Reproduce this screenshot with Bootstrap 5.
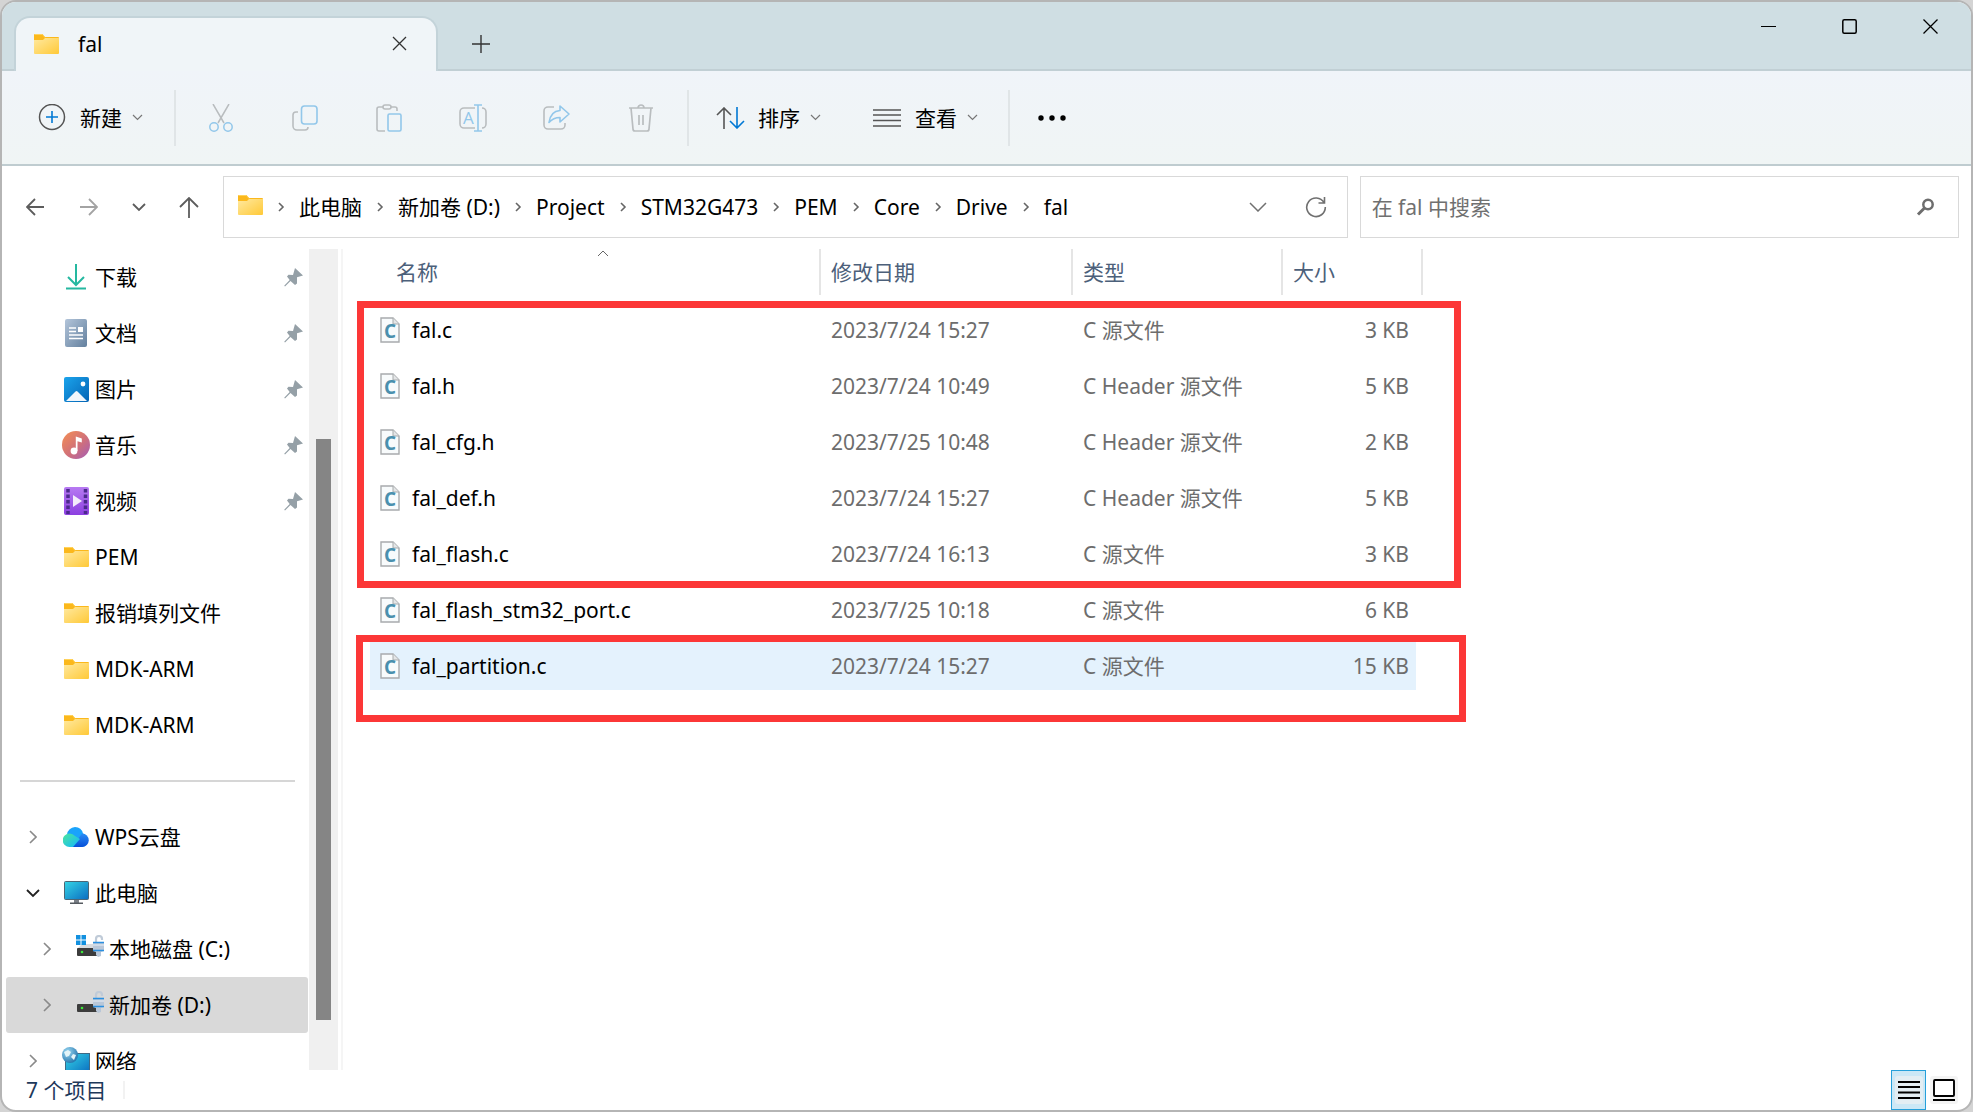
<!DOCTYPE html>
<html lang="zh-CN">
<head>
<meta charset="utf-8">
<meta name="viewport" content="width=device-width, initial-scale=1">
<title>fal</title>
<link href="https://cdn.jsdelivr.net/npm/bootstrap@5.3.0/dist/css/bootstrap.min.css" rel="stylesheet">
<style>
body{font-family:"Noto Sans","Noto Sans CJK SC",sans-serif;font-size:21px;line-height:28px;color:#000;background:#d4d4d4;overflow:hidden}
svg{display:block;flex:none}
button{color:inherit}
.win{border:2px solid #b5b5b5;border-radius:16px;background:#fff}
.titlebar{background:#cfdee3;height:69px;border-bottom:2px solid #c1cfd4}
.wtab{width:424px;height:55px;margin:0 0 -2px 12px;padding:0 29px 2px 18px;border:2px solid #c3d3d9;border-bottom:0;border-radius:16px 16px 0 0;background:#f0f5f8}
.wtab span{margin-left:19px}
.plainbtn{border:0;background:none;padding:0;display:flex;align-items:center;justify-content:center;flex:none}
.addtab{width:86px;height:51px}
.winbtn{width:81px;height:48px}
.cmdbar{height:95px;padding-left:36px;background:linear-gradient(#f0f4f9,#f0f5f5);border-bottom:2px solid #bfccd0}
.lbl{margin:0 10px 0 14px}
.vline{width:2px;height:56px;background:#e0e5e7;flex:none}
.cmd{width:84px;height:56px}
.cmdnew{width:136px;justify-content:flex-start}
.cmdsort,.cmdview{justify-content:flex-start;padding-left:27px}
.cmdsort{width:157px}
.cmdview{width:162px}
.cmdsort .lbl{margin-left:13px}
.cmdgroup{padding:0 4px 0 3px}
.addrrow{height:83px;padding:10px 12px 11px 8px}
.navb{width:50px;height:50px}
.addr{flex:1124 1 1124px;min-width:0;border:1px solid #d9d9d9;margin-left:9px;padding:0 6px 0 14px}
.search{flex:599 1 599px;min-width:0;border:1px solid #d9d9d9;margin-left:12px;padding:0 23px 0 11px}
.search input{border:0;outline:0;background:none;flex:1;min-width:0;padding:0}
.search input::placeholder{color:#707070;opacity:1}
.crumbs{margin:0}
.crumbs li{display:flex;align-items:center}
.crumbs svg{margin:0 14px}
.crumbs a,.tree a{color:#000;text-decoration:none;white-space:nowrap}
.side{width:341px;overflow:hidden;border-right:2px solid #f5f5f5}
.tree{width:307px;padding-left:4px}
.tree a{display:flex;align-items:center;height:56px;flex:none}
.twist{width:28px;margin-left:13px;display:flex;justify-content:center}
.ico{width:28px;margin-left:15px;margin-right:5px;display:flex;justify-content:center}
.nest .twist{margin-left:27px}
.picked{background:#d9d9d9;border-radius:3px;margin-right:1px}
.pinned{margin-left:auto;margin-right:5px}
.rule{height:2px;background:#d6d6d6;margin:27px 14px 27px 14px;flex:none}
.track{width:29px;background:#f0f0f0;padding-top:190px}
.thumb{width:15px;height:581px;margin:0 auto;background:#858585}
.files{padding-left:27px;overflow:hidden}
.filewrap{width:1053px;position:relative}
.ftable{table-layout:fixed;width:100%;border-collapse:separate;border-spacing:0;white-space:nowrap}
.ftable th{height:46px;font-weight:400;color:#4c607a;padding:0 0 0 10px;border-right:2px solid #e5e5e5;position:relative}
.ftable th:first-child{padding-left:26px}
.sortmark{position:absolute;top:0;left:50%;margin-left:2px}
.ftable td{height:56px;padding:0 0 0 10px;color:#6d6d6d;border:solid transparent;border-width:4px 0;background-clip:padding-box}
.ftable td:first-child{color:#000;padding-left:10px}
.ftable td:last-child{text-align:right;padding:0 7px 0 0;border-right-width:7px}
.ftable .gap td{height:7px;border:0;padding:0}
.hov td{background-color:#e4f2fd}
.mark1,.mark2{position:absolute;border:7px solid #fc3737;pointer-events:none}
.mark1{left:-13px;top:52px;width:1104px;height:287px}
.mark2{left:-14px;top:386px;width:1110px;height:87px}
.status{height:40px;padding:0 10px 0 24px;color:#1e395b}
.status .vl{width:2px;height:18px;background:#f2f2f2;margin-left:17px}
.modebtn{width:35px;height:40px;border:1px solid transparent}
.modebtn.on{background:#cbe8f6;border-color:#26a0da}
</style>
</head>
<body class="vh-100">
<svg width="0" height="0" class="position-absolute" aria-hidden="true">
<defs>
<linearGradient id="gf" x1="0" y1="0" x2="1" y2="1"><stop offset="0" stop-color="#ffe9a0"/><stop offset="1" stop-color="#ffc937"/></linearGradient>
<linearGradient id="gdoc" x1="0" y1="0" x2="1" y2="1"><stop offset="0" stop-color="#b3c5da"/><stop offset="1" stop-color="#63809e"/></linearGradient>
<linearGradient id="gpic" x1="0" y1="0" x2="1" y2="1"><stop offset="0" stop-color="#1ba4ec"/><stop offset="1" stop-color="#0463b4"/></linearGradient>
<linearGradient id="gmus" x1="0" y1="0" x2="1" y2="1"><stop offset="0" stop-color="#f58f52"/><stop offset=".55" stop-color="#d0707a"/><stop offset="1" stop-color="#a45cb8"/></linearGradient>
<linearGradient id="gvid" x1="0" y1="0" x2="0" y2="1"><stop offset="0" stop-color="#b77af2"/><stop offset="1" stop-color="#8c3fe0"/></linearGradient>
<linearGradient id="gmon" x1="0" y1="0" x2="1" y2="1"><stop offset="0" stop-color="#35d5e6"/><stop offset="1" stop-color="#0a6cc0"/></linearGradient>
<linearGradient id="gcl" x1="0" y1="0" x2="1" y2="1"><stop offset="0" stop-color="#4be79c"/><stop offset="1" stop-color="#12b5ff"/></linearGradient>
<linearGradient id="gcd" x1="0" y1="0" x2="0" y2="1"><stop offset="0" stop-color="#2a8cf5"/><stop offset="1" stop-color="#064fd8"/></linearGradient>
<radialGradient id="ggl" cx=".35" cy=".3" r=".8"><stop offset="0" stop-color="#9ad8f2"/><stop offset="1" stop-color="#1d6ea8"/></radialGradient>
</defs>
<symbol id="folder" viewBox="0 0 25 20"><path d="M1 0h7.500l2.500 3h13a1 1 0 0 1 1 1v5H0V1a1 1 0 0 1 1-1z" fill="#fbb81c"/><path d="M1 .5h7.500l2.500 3" stroke="#ffd35c" fill="none"/><path d="M0 6h9l2-2h14v15a1 1 0 0 1-1 1H1a1 1 0 0 1-1-1z" fill="url(#gf)"/></symbol>
<symbol id="pin" viewBox="0 0 20 20"><path d="M11 1l8 7.500-6 1.800 0 6.200-2 1.500-4.500-4-5.500 5.500-.8-.8 5.500-5.600-2.700-3.600 1.500-1.800 4.500.2z" fill="#95a0a7"/></symbol>
<symbol id="dn" viewBox="0 0 11 7"><path d="M1 1l4.500 4.500L10 1" fill="none" stroke="#777" stroke-width="1.200"/></symbol>
<symbol id="rt" viewBox="0 0 8 14"><path d="M1 1l6 6-6 6" fill="none" stroke="currentColor" stroke-width="1.600"/></symbol>
<symbol id="drive" viewBox="0 0 28 24"><path d="M6 9h19l2 5H1z" fill="#d9dbde"/><rect x="1" y="13" width="24" height="8" rx="1" fill="#3c3c3c"/><circle cx="6" cy="17" r="1.300" fill="#3be83b"/><path d="M20 8V4a3 3 0 0 1 6 0v1" fill="none" stroke="#c0cbd8" stroke-width="2.200"/><path d="M17 7h11v9l-3 1v4l-3 1-2-2v-3l-3-1z" fill="#b9c7d8"/><path d="M17 7.500h11M17 15.500h11" stroke="#2a8fe0" stroke-width="1.500"/><path d="M17 10h11" stroke="#e9eef5"/></symbol>
</svg>

<div class="win vh-100 d-flex flex-column overflow-hidden">
<header class="titlebar d-flex align-items-end flex-shrink-0">
  <div class="wtab d-flex align-items-center flex-shrink-0">
    <svg width="25" height="20"><use href="#folder"/></svg><span>fal</span>
    <button class="plainbtn ms-auto" aria-label="关闭标签页"><svg width="15" height="15"><path d="M1 1l13 13M14 1L1 14" stroke="#333" stroke-width="1.300"/></svg></button>
  </div>
  <button class="plainbtn addtab" aria-label="新标签页"><svg width="18" height="18"><path d="M9 0v18M0 9h18" stroke="#333" stroke-width="1.400"/></svg></button>
  <div class="d-flex ms-auto align-self-start">
    <button class="plainbtn winbtn" aria-label="最小化"><svg width="15" height="15"><path d="M0 7.500h15" stroke="#000"/></svg></button>
    <button class="plainbtn winbtn" aria-label="最大化"><svg width="15" height="15"><rect x=".8" y=".8" width="13.400" height="13.400" rx="1.500" fill="none" stroke="#000" stroke-width="1.500"/></svg></button>
    <button class="plainbtn winbtn" aria-label="关闭"><svg width="15" height="15"><path d="M.5.5l14 14M14.500.5l-14 14" stroke="#000" stroke-width="1.300"/></svg></button>
  </div>
</header>

<div class="cmdbar d-flex align-items-center flex-shrink-0" role="toolbar" aria-label="命令">
  <button class="plainbtn cmd cmdnew"><svg width="28" height="28" fill="none"><circle cx="14" cy="13" r="12.500" stroke="#555" stroke-width="1.500"/><path d="M14 7v12M8 13h12" stroke="#0078d4" stroke-width="1.600"/></svg><span class="lbl">新建</span><svg width="11" height="7"><use href="#dn"/></svg></button>
  <div class="vline"></div>
  <div class="cmdgroup d-flex">
    <button class="plainbtn cmd" aria-label="剪切"><svg width="26" height="28" fill="none" stroke-width="1.500"><path d="M5 0l11 19M21 0L10 19" stroke="#b9bdbf"/><circle cx="6" cy="23" r="4.200" stroke="#92c7ea"/><circle cx="20" cy="23" r="4.200" stroke="#92c7ea"/></svg></button>
    <button class="plainbtn cmd" aria-label="复制"><svg width="26" height="26" fill="none" stroke-width="1.600"><path d="M6 7H4a3 3 0 0 0-3 3v11a4 4 0 0 0 4 4h8a3 3 0 0 0 3-3" stroke="#b9bdbf"/><rect x="9.500" y="1" width="15.500" height="18" rx="3" stroke="#92c7ea"/></svg></button>
    <button class="plainbtn cmd" aria-label="粘贴"><svg width="26" height="28" fill="none" stroke-width="1.600"><path d="M7 3H3a2 2 0 0 0-2 2v20a2 2 0 0 0 2 2h6M15 3h4a2 2 0 0 1 2 2v2" stroke="#b9bdbf"/><rect x="7" y="1" width="8" height="4" rx="2" stroke="#b9bdbf"/><rect x="12" y="10" width="13" height="17" rx="1.500" stroke="#92c7ea"/></svg></button>
    <button class="plainbtn cmd" aria-label="重命名"><svg width="28" height="28" fill="none" stroke-width="1.600"><path d="M16 4H5a4 4 0 0 0-4 4v12a4 4 0 0 0 4 4h11M23 4a4 4 0 0 1 4 4v12a4 4 0 0 1-4 4" stroke="#b9bdbf"/><path d="M19 1v26M15 1h8M15 27h8" stroke="#92c7ea"/><text x="4" y="20" font-family="Open Sans, sans-serif" font-size="17" fill="#92c7ea">A</text></svg></button>
    <button class="plainbtn cmd" aria-label="共享"><svg width="28" height="26" fill="none" stroke-width="1.600" stroke-linejoin="round"><path d="M11 2H5a4 4 0 0 0-4 4v14a4 4 0 0 0 4 4h13a4 4 0 0 0 4-4v-2" stroke="#b9bdbf"/><path d="M17 1l9 8-9 8v-4.500c-5 0-8 1.500-11 5C7 10 10 6 17 5.500z" stroke="#92c7ea"/></svg></button>
    <button class="plainbtn cmd" aria-label="删除"><svg width="26" height="28" fill="none" stroke="#b9bdbf" stroke-width="1.700"><path d="M1 4h24M10 4a3 3 0 0 1 6 0M3 4l2 21a2 2 0 0 0 2 2h12a2 2 0 0 0 2-2l2-21M11 11v10M15 11v10"/></svg></button>
  </div>
  <div class="vline"></div>
  <button class="plainbtn cmd cmdsort"><svg width="29" height="22" fill="none" stroke-width="1.600"><path d="M8 22V1M1 8l7-7 7 7" stroke="#555"/><path d="M21 0v21M14 14l7 7 7-7" stroke="#0078d4"/></svg><span class="lbl">排序</span><svg width="11" height="7"><use href="#dn"/></svg></button>
  <button class="plainbtn cmd cmdview"><svg width="28" height="20"><path d="M0 2h28M0 7h28M0 12.500h28M0 18h28" stroke="#555" stroke-width="1.600"/></svg><span class="lbl">查看</span><svg width="11" height="7"><use href="#dn"/></svg></button>
  <div class="vline"></div>
  <button class="plainbtn cmd" aria-label="更多"><svg width="30" height="8"><circle cx="4" cy="4" r="2.700"/><circle cx="15" cy="4" r="2.700"/><circle cx="26" cy="4" r="2.700"/></svg></button>
</div>

<div class="addrrow d-flex flex-shrink-0">
  <nav class="d-flex align-items-center" aria-label="导航">
    <button class="plainbtn navb" aria-label="后退"><svg width="18" height="18" fill="none" stroke="#5c5c5c" stroke-width="1.800"><path d="M18 9H1M9 1L1 9l8 8"/></svg></button>
    <button class="plainbtn navb ms-1" aria-label="前进"><svg width="18" height="18" fill="none" stroke="#a3a3a3" stroke-width="1.800"><path d="M0 9h17M9 1l8 8-8 8"/></svg></button>
    <button class="plainbtn navb" aria-label="最近"><svg width="14" height="9" fill="none" stroke="#5c5c5c" stroke-width="1.800"><path d="M1 1l6 6 6-6"/></svg></button>
    <button class="plainbtn navb" aria-label="向上"><svg width="20" height="21" fill="none" stroke="#5c5c5c" stroke-width="1.800"><path d="M10 21V1M1 10l9-9 9 9"/></svg></button>
  </nav>
  <div class="addr d-flex align-items-center">
    <svg width="25" height="20" class="mb-1"><use href="#folder"/></svg>
    <ol class="crumbs d-flex list-unstyled" id="crumbs"></ol>
    <button class="plainbtn navb ms-auto" aria-label="历史"><svg width="18" height="10" fill="none" stroke="#707070" stroke-width="1.500"><path d="M1 1l8 8 8-8"/></svg></button>
    <button class="plainbtn navb ms-2" aria-label="刷新"><svg width="22" height="22" fill="none" stroke="#707070" stroke-width="1.600"><path d="M19 6.500A9.300 9.300 0 1 0 20.300 11M19.500 1v6h-6"/></svg></button>
  </div>
  <label class="search d-flex align-items-center"><input type="text" placeholder="在 fal 中搜索" aria-label="搜索"><svg width="19" height="18" fill="none" stroke="#6d6d6d"><circle cx="12" cy="6.500" r="4.700" stroke-width="2.500"/><path d="M8.500 10L2 16.500" stroke-width="3"/></svg></label>
</div>

<div class="d-flex flex-grow-1" style="min-height:0">
  <aside class="side d-flex flex-shrink-0">
    <nav class="tree d-flex flex-column" id="tree" aria-label="文件夹"></nav>
    <div class="track"><div class="thumb"></div></div>
  </aside>
  <main class="files flex-grow-1">
    <div class="filewrap">
      <table class="ftable">
        <colgroup><col style="width:451px"><col style="width:252px"><col style="width:210px"><col></colgroup>
        <thead><tr><th scope="col">名称<svg class="sortmark" width="12" height="8" fill="none" stroke="#666"><path d="M1 7l5-5 5 5"/></svg></th><th scope="col">修改日期</th><th scope="col">类型</th><th scope="col">大小</th></tr></thead>
        <tbody id="rows"><tr class="gap" aria-hidden="true"><td colspan="4"></td></tr></tbody>
      </table>
      <div class="mark1"></div><div class="mark2"></div>
    </div>
  </main>
</div>

<footer class="status d-flex align-items-center flex-shrink-0">
  <span>7 个项目</span><span class="vl"></span>
  <button class="plainbtn modebtn on ms-auto" aria-label="详细信息"><svg width="28" height="28"><rect width="28" height="28" rx="3" fill="#e3eef3"/><path d="M3 6h22M3 11h22M3 16.500h22M3 22h22" stroke="#000" stroke-width="1.800"/></svg></button>
  <button class="plainbtn modebtn" aria-label="大图标"><svg width="28" height="28"><rect width="28" height="28" rx="3" fill="#f4f4f4"/><rect x="4" y="4" width="20" height="16" rx="1" fill="#fff" stroke="#000" stroke-width="1.900"/><path d="M3 24h22" stroke="#000" stroke-width="1.800"/></svg></button>
</footer>
</div>

<script src="https://cdn.jsdelivr.net/npm/bootstrap@5.3.0/dist/js/bootstrap.bundle.min.js"></script>
<script>
const sep = '<svg width="8" height="10" fill="none" stroke="#666" stroke-width="1.600"><path d="M2 1l4 4-4 4"/></svg>';
document.getElementById('crumbs').innerHTML = ['此电脑','新加卷 (D:)','Project','STM32G473','PEM','Core','Drive','fal']
  .map(t => `<li>${sep}<a href="#">${t}</a></li>`).join('');

const win4 = '<path d="M0 0h4.500v4.500H0zM5.500 0H10v4.500H5.500zM0 5.500h4.500V10H0zM5.500 5.500H10V10H5.500z" fill="#1290df"/>';
const icons = {
  folder: '<svg width="25" height="20"><use href="#folder"/></svg>',
  down: '<svg width="20" height="26" fill="none" stroke="#25b8a0" stroke-width="2"><path d="M2 13l8 8 8-8"/><path d="M10 0v21M0 24.500h20"/></svg>',
  doc: '<svg width="22" height="28"><rect width="22" height="28" rx="2" fill="url(#gdoc)"/><path d="M4 9h7M4 12.500h7M4 16h14M4 19.500h14" stroke="#fff" stroke-width="1.600"/><path d="M13 8h5v5h-5z" fill="#fff"/></svg>',
  pic: '<svg width="25" height="25"><rect width="25" height="25" rx="2" fill="url(#gpic)"/><path d="M2 24l9.500-9.500a1.500 1.500 0 0 1 2 0L23 24z" fill="#f1f6fb"/><circle cx="19" cy="7" r="2.400" fill="#fff"/></svg>',
  music: '<svg width="28" height="28"><circle cx="14" cy="14" r="14" fill="url(#gmus)"/><circle cx="12" cy="20" r="3.400" fill="#fff"/><path d="M13.800 20V5.500l6 2v4l-4.300-1.300V20z" fill="#fff"/></svg>',
  video: '<svg width="25" height="28"><rect width="25" height="28" rx="2" fill="url(#gvid)"/><path d="M4 2v25M21.500 2v25" stroke="#4b2a8c" stroke-width="3.500" stroke-dasharray="3.500 2"/><path d="M9 8l9 6-9 6z" fill="#f3ecfb"/></svg>',
  cloud: '<svg width="26" height="20"><path d="M12 0a8.500 8.500 0 0 1 8 6.500A7 7 0 0 1 19 20H7L4 7.500A8.500 8.500 0 0 1 12 0z" fill="#1aa3fb"/><path d="M19 6.500a6.700 6.700 0 0 1 0 13.500H9z" fill="url(#gcd)"/><path d="M6.500 6.500A7 7 0 0 1 12 9l5 3-7 8H6.500a6.700 6.700 0 0 1 0-13.500z" fill="url(#gcl)"/></svg>',
  pc: '<svg width="25" height="24"><path d="M10 18h5v4h-5z" fill="#7b8087"/><path d="M6 21.500h13V23H6z" fill="#555a60"/><rect x=".5" y=".5" width="24" height="18" rx="1" fill="url(#gmon)" stroke="#4c6675"/></svg>',
  sys: `<svg width="28" height="24" class="mb-1"><use href="#drive" width="28" height="24"/>${win4}</svg>`,
  disk: '<svg width="28" height="24" class="mb-1"><use href="#drive" width="28" height="24"/></svg>',
  net: '<svg width="28" height="28"><rect x="3.500" y="6.500" width="24" height="20" fill="url(#gmon)" stroke="#3f6a85"/><circle cx="8" cy="8" r="8" fill="url(#ggl)"/><path d="M2 5l4-2 3 2-2 4-3 1zM11 7l3 1-2 5-3-3z" fill="#e3f4f8"/></svg>'
};
const tree = [
  ['down','下载','p'],['doc','文档','p'],['pic','图片','p'],['music','音乐','p'],['video','视频','p'],
  ['folder','PEM',''],['folder','报销填列文件',''],['folder','MDK-ARM',''],['folder','MDK-ARM',''],null,
  ['cloud','WPS云盘','r'],['pc','此电脑','o'],['sys','本地磁盘 (C:)','rn'],['disk','新加卷 (D:)','rns'],['net','网络','r']
];
document.getElementById('tree').innerHTML = tree.map(n => {
  if (!n) return '<div class="rule"></div>';
  const [ic, t, f] = n, has = c => f.includes(c);
  const tw = has('r') ? '<svg width="8" height="14" color="#8a8a8a"><use href="#rt"/></svg>'
    : has('o') ? '<svg width="14" height="9" fill="none" stroke="#222" stroke-width="1.800"><path d="M1 1l6 6 6-6"/></svg>' : '';
  return `<a href="#" class="${has('n') ? 'nest' : ''} ${has('s') ? 'picked' : ''}"><span class="twist">${tw}</span><span class="ico">${icons[ic]}</span><span>${t}</span>${has('p') ? '<svg class="pinned" width="20" height="20"><use href="#pin"/></svg>' : ''}</a>`;
}).join('');

const cfile = '<svg width="20" height="26" class="me-2"><path d="M1 1h12l6 6v18H1z" fill="#f8fbfc" stroke="#a8abad" stroke-width="1.400"/><path d="M13 1v6h6" fill="#e4e6e7" stroke="#a8abad"/><text x="4" y="21" font-family="Open Sans, sans-serif" font-size="19" font-weight="700" fill="#4a90ae">C</text></svg>';
const rows = [
  ['fal.c','2023/7/24 15:27','C 源文件','3 KB'],
  ['fal.h','2023/7/24 10:49','C Header 源文件','5 KB'],
  ['fal_cfg.h','2023/7/25 10:48','C Header 源文件','2 KB'],
  ['fal_def.h','2023/7/24 15:27','C Header 源文件','5 KB'],
  ['fal_flash.c','2023/7/24 16:13','C 源文件','3 KB'],
  ['fal_flash_stm32_port.c','2023/7/25 10:18','C 源文件','6 KB'],
  ['fal_partition.c','2023/7/24 15:27','C 源文件','15 KB']
];
document.getElementById('rows').insertAdjacentHTML('beforeend', rows.map((r, i) =>
  `<tr class="${i === 6 ? 'hov' : ''}"><td><div class="d-flex align-items-center">${cfile}<span class="ms-1">${r[0]}</span></div></td><td>${r[1]}</td><td>${r[2]}</td><td>${r[3]}</td></tr>`).join(''));
</script>
</body>
</html>
